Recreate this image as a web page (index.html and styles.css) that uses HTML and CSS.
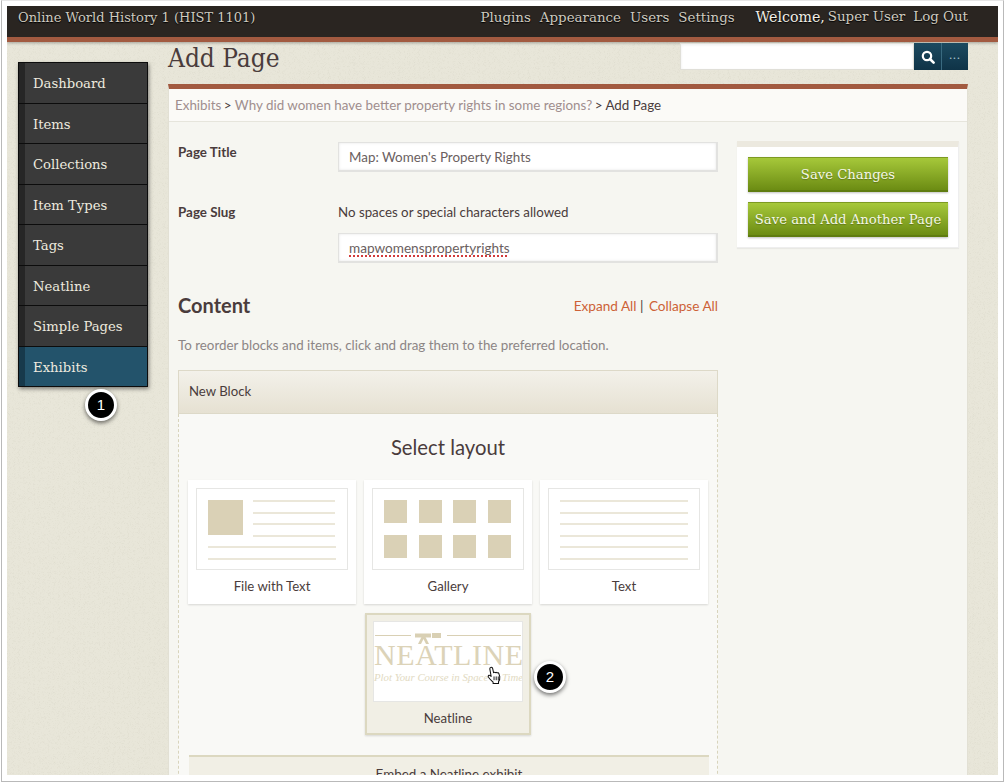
FILE: index.html
```html
<!DOCTYPE html>
<html lang="en">
<head>
<meta charset="utf-8">
<title>Add Page</title>
<link rel="stylesheet" href="styles.css">
</head>
<body>
<div class="shot">
<div class="window">
  <header class="topbar">
    <div class="site">Online World History 1 (HIST 1101)</div>
    <nav class="topnav"><a>Plugins</a><a>Appearance</a><a>Users</a><a>Settings</a></nav>
    <div class="user"><b>Welcome,</b> <a>Super User</a><a class="logout">Log Out</a></div>
  </header>
  <div class="layout">
    <nav class="side">
      <a>Dashboard</a><a>Items</a><a>Collections</a><a>Item Types</a><a>Tags</a><a>Neatline</a><a>Simple Pages</a><a class="on">Exhibits</a>
    </nav>
    <main class="main">
      <div class="titlebar">
        <h1>Add Page</h1>
        <form class="search">
          <div class="search-input"></div>
          <div class="search-btn"><svg width="14" height="14" viewBox="0 0 14 14"><circle cx="6" cy="6" r="4.2" fill="none" stroke="#fff" stroke-width="2.2"/><path d="M9 9l3.6 3.6" stroke="#fff" stroke-width="2.6" stroke-linecap="round"/></svg></div>
          <div class="search-btn more">...</div>
        </form>
      </div>
      <section class="panel">
        <div class="crumbs"><a>Exhibits</a> &gt; <a>Why did women have better property rights in some regions?</a> &gt; Add Page</div>
        <div class="panel-body">
          <div class="form">
            <div class="field">
              <label>Page Title</label>
              <div class="control"><div class="input">Map: Women's Property Rights</div></div>
            </div>
            <div class="field slug">
              <label>Page Slug</label>
              <div class="control"><p class="hint">No spaces or special characters allowed</p><div class="input"><span class="misspelt">mapwomenspropertyrights</span></div></div>
            </div>
            <div class="content-head"><h2>Content</h2><div class="toggle"><a>Expand All</a> | <a>Collapse All</a></div></div>
            <p class="desc">To reorder blocks and items, click and drag them to the preferred location.</p>
            <div class="block-head">New Block</div>
            <div class="block-body">
              <h3>Select layout</h3>
              <div class="layouts">
                <div class="card">
                  <div class="thumb"><svg width="150" height="80" viewBox="0 0 150 80"><rect x="11" y="11" width="35" height="35" fill="#dad1b6"/><g fill="#ebe7d9"><rect x="56" y="11" width="82" height="2"/><rect x="56" y="23" width="82" height="2"/><rect x="56" y="34" width="82" height="2"/><rect x="56" y="46" width="82" height="2"/><rect x="11" y="57" width="128" height="2"/><rect x="11" y="69" width="128" height="2"/></g></svg></div>
                  <span>File with Text</span>
                </div>
                <div class="card">
                  <div class="thumb"><svg width="150" height="80" viewBox="0 0 150 80"><g fill="#dad1b6"><rect x="11" y="11" width="23" height="23"/><rect x="46" y="11" width="23" height="23"/><rect x="80" y="11" width="23" height="23"/><rect x="115" y="11" width="23" height="23"/><rect x="11" y="46" width="23" height="23"/><rect x="46" y="46" width="23" height="23"/><rect x="80" y="46" width="23" height="23"/><rect x="115" y="46" width="23" height="23"/></g></svg></div>
                  <span>Gallery</span>
                </div>
                <div class="card">
                  <div class="thumb"><svg width="150" height="80" viewBox="0 0 150 80"><g fill="#ebe7d9"><rect x="11" y="11" width="128" height="2"/><rect x="11" y="23" width="128" height="2"/><rect x="11" y="34" width="128" height="2"/><rect x="11" y="46" width="128" height="2"/><rect x="11" y="57" width="128" height="2"/><rect x="11" y="69" width="128" height="2"/></g></svg></div>
                  <span>Text</span>
                </div>
                <div class="card selected">
                  <div class="thumb neat">
                    <svg class="neat-rule" width="148" height="14" viewBox="0 0 148 14"><g fill="#d9d0b4"><rect x="1" y="5" width="36" height="1"/><rect x="73" y="5" width="74" height="1"/><rect x="41" y="3.500" width="16" height="4"/><rect x="58" y="3" width="9" height="5"/><path d="M48 6h3l4 8h-3l-2.500-5-2.500 5h-3z"/></g></svg>
                    <div class="neat-word">NEATLINE</div>
                    <div class="neat-tag">Plot Your Course in Space &amp; Time</div>
                  </div>
                  <span>Neatline</span>
                  <svg class="cursor" width="15" height="19" viewBox="0 0 16 20"><path d="M4 1.500c1-.6 1.800 0 2 1l1 4.500c.5-.6 1.500-.6 2 0 .5-.5 1.500-.4 1.900.2.600-.3 1.400-.1 1.700.6l1 3.500c.3 2-.3 3.900-1.300 5.200v2H6.500v-1.500C5 15.500 3 13.800 1.600 11.800c-.6-.9-.3-1.700.4-2 .7-.2 1.500.3 2.400 1.200L3 3c-.1-.7.300-1.200 1-1.500z" fill="#fff" stroke="#111" stroke-width="1.100" stroke-linejoin="round"/><path d="M7.500 11v4M9.800 11v4M12 11v4" stroke="#111"/></svg>
                </div>
              </div>
              <div class="embed">Embed a Neatline exhibit</div>
            </div>
          </div>
          <aside class="actions">
            <a class="btn">Save Changes</a>
            <a class="btn">Save and Add Another Page</a>
          </aside>
        </div>
      </section>
    </main>
  </div>
  <div class="marker m1">1</div>
  <div class="marker m2">2</div>
</div>
</div>
</body>
</html>
```
FILE: styles.css
```css
* { box-sizing: border-box; }
html, body { margin: 0; height: 784px; overflow: hidden; background: #fff; }
body { font-family: "Lato", sans-serif; color: #4a3c3c; }
a { color: inherit; text-decoration: none; }
.shot { width: 1003px; height: 782px; margin-left: 1px; border: 1px solid #b9b9b9; border-top-color: #e6e6e6; padding: 5px 0 0 5px; }
.window {
  position: relative; width: 991px; height: 769px; overflow: hidden;
  background-color: #e8e6d9;
  background-image: url("data:image/svg+xml,%3Csvg xmlns='http://www.w3.org/2000/svg' width='200' height='200'%3E%3Cfilter id='n'%3E%3CfeTurbulence baseFrequency='.8' numOctaves='2'/%3E%3CfeColorMatrix values='0 0 0 0 .5 0 0 0 0 .48 0 0 0 0 .38 0 0 0 .35 -.08'/%3E%3C/filter%3E%3Crect width='200' height='200' filter='url(%23n)'/%3E%3C/svg%3E");
}
.topbar {
  display: flex; align-items: center; height: 36px; padding: 0 30px 9px 11px;
  background: #2a2521; border-bottom: 5px solid #a25a40;
  font-family: "DejaVu Serif", serif; font-size: 13.4px; color: #cfcbc0;
  box-shadow: 0 1px 3px rgba(0,0,0,.3);
  text-shadow: 0 1px 1px #000;
}
.site { flex: 1; font-size: 13px; }
.topnav { display: flex; gap: 9px; margin-right: 21px; }
.user { display: flex; gap: 3px; }
.user b { color: #f2efe6; font-weight: 400; font-size: 14.2px; }
.logout { margin-left: 5px; }
.layout { display: flex; align-items: flex-start; padding-left: 11px; }
.side {
  display: flex; flex-direction: column; flex: none; width: 130px; height: 325px; margin-top: 20px;
  border: 1px solid #0c0c0c; background: #0c0c0c; gap: 1px;
  box-shadow: 1px 2px 4px rgba(0,0,0,.45);
  font-family: "DejaVu Serif", serif; font-size: 13.2px; color: #eeeadf;
}
.side a {
  flex: 1; display: flex; align-items: center; padding: 2px 0 0 8px;
  background: #3a3a3a; border-left: 6px solid #262626;
}
.side a.on { background: #23536b; border-left-color: #17394b; }
.main { flex: none; width: 800px; margin-left: 20px; }
.titlebar { display: flex; justify-content: space-between; height: 42px; }
h1 { margin: 1px 0 0; font: 400 26px/30px "DejaVu Serif Condensed", "DejaVu Serif", serif; color: #4a3c3c; }
.search { display: flex; margin: 1px 0 0; height: 27px; }
.search-input { width: 234px; background: #fff; border: 1px solid #e0dfd8; box-shadow: inset 0 1px 3px rgba(0,0,0,.08); }
.search-btn {
  width: 27px; display: flex; align-items: center; justify-content: center;
  background: linear-gradient(#1c4a60, #0f3347);
  color: #a9c3cf; font-size: 12px; letter-spacing: 1px;
}
.search-btn.more { border-left: 1px solid #3a6a80; padding-bottom: 5px; }
.panel { height: 700px; border-top: 5px solid #a25a40; background: #f6f6f1; border-right: 1px solid #e2e0d4; border-left: 1px solid #e2e0d4; }
.crumbs { height: 33px; padding: 0 0 1px 6px; line-height: 32px; background: #fbfaf7; border-bottom: 1px solid #e6e5dc; font-size: 13.4px; color: #4a3c3c; white-space: nowrap; }
.crumbs a { color: #a08e8e; margin-right: -1px; }
.panel-body { display: flex; align-items: flex-start; padding: 20px 0 0 9px; }
.form { width: 540px; flex: none; }
.field { display: flex; }
.field label { width: 160px; flex: none; font-weight: 700; font-size: 13.4px; line-height: 20px; }
.control { flex: 1; }
.input {
  height: 30px; padding: 1px 0 0 10px; display: flex; align-items: center; background: #fff;
  border: 2px solid #e2e2e0; border-width: 1px 2px 2px 1px; font-size: 13.4px; color: #6a6060;
  box-shadow: inset 0 0 3px rgba(0,0,0,.1);
}
.misspelt { font-size: 13.6px; text-decoration: underline dotted #d23a3a 1.5px; text-underline-offset: 2px; }
.slug { margin-top: 30px; }
.hint { margin: 0 0 11px; line-height: 20px; font-size: 13.3px; }
.content-head { display: flex; justify-content: space-between; align-items: center; margin-top: 28px; height: 28px; }
h2 { margin: 0; font-size: 20px; font-weight: 700; color: #4a3c3c; }
.toggle { padding-top: 1px; font-size: 13.6px; color: #4a3c3c; }
.toggle a { color: #cd6237; }
.toggle a + a { margin-left: 2px; }
.desc { margin: 16px 0 0; font-size: 13.35px; line-height: 20px; color: #8c8585; }
.block-head {
  margin-top: 15px; height: 44px; padding: 0 0 2px 10px; display: flex; align-items: center; font-size: 13.2px;
  background: linear-gradient(#f3f1ea, #e6e1d2); border: 1px solid #ddd9c8;
}
.block-body { border: dashed #d8d4bc; border-width: 0 1px; height: 400px; padding: 0 9px; background: #f9f9f6; }
h3 { margin: 0; padding-top: 18px; height: 66px; text-align: center; font-size: 20.3px; line-height: 30px; font-weight: 400; color: #4a3c3c; }
.layouts { display: flex; flex-wrap: wrap; justify-content: center; gap: 8px; }
.card {
  position: relative; width: 168px; height: 124px; padding: 8px; background: #fff; text-align: center;
  box-shadow: 0 1px 2px rgba(0,0,0,.14); font-size: 13.2px;
}
.card span { display: block; margin-top: 6px; line-height: 20px; }
.thumb { height: 82px; background: #fff; border: 1px solid #e6e6e4; }
.thumb svg { display: block; }
.card.selected { width: 166px; height: 122px; margin-top: 1px; padding: 6px; background: #f1efe5; border: 2px solid #dcd8c0; box-shadow: 0 1px 2px rgba(0,0,0,.14); }
.selected .thumb { height: 81px; }
.selected span { margin-top: 6px; }
.neat { overflow: hidden; text-align: center; }
.neat-rule { margin-top: 8px; }
.neat-word { font: 400 30px/30px "Liberation Serif", serif; letter-spacing: .6px; color: #dcd3b8; margin-top: -4px; white-space: nowrap; }
.neat-tag { font: italic 400 10.8px/16px "Liberation Serif", serif; color: #e2dac2; margin-top: -1px; white-space: nowrap; }
.cursor { position: absolute; left: 120px; top: 51px; }
.embed { margin: 20px -1px 0 1px; height: 60px; padding-top: 9px; background: #f1efe5; border-top: 2px solid #dcd8c0; text-align: center; font-size: 13.4px; }
.actions { flex: none; width: 222px; margin: -1px 0 0 19px; padding: 10px 10px 10px 11px; background: #fff; border-top: 6px solid #ece9df; border-right: 1px solid #eee; border-bottom: 1px solid #eee; display: flex; flex-direction: column; gap: 10px; box-shadow: 0 1px 1px rgba(0,0,0,.05); }
.btn {
  height: 35px; display: flex; align-items: center; justify-content: center;
  background: linear-gradient(#a6c83a, #6c8c13); border-top: 1px solid #7d9a22; border-bottom: 2px solid #5f7c10;
  font-family: "DejaVu Serif", serif; font-size: 13.2px; color: #f4f7e6; white-space: nowrap;
  box-shadow: 0 1px 2px rgba(0,0,0,.25); text-shadow: 0 1px 1px rgba(0,0,0,.25);
}
.marker {
  position: absolute; width: 32px; height: 32px; border-radius: 50%; background: #000; border: 3px solid #fff;
  box-shadow: 0 2px 4px rgba(0,0,0,.55); color: #fff; font: 400 15px/26px "Liberation Sans", sans-serif; text-align: center;
}
.m1 { left: 78px; top: 383px; }
.m2 { left: 527px; top: 655px; }
```
